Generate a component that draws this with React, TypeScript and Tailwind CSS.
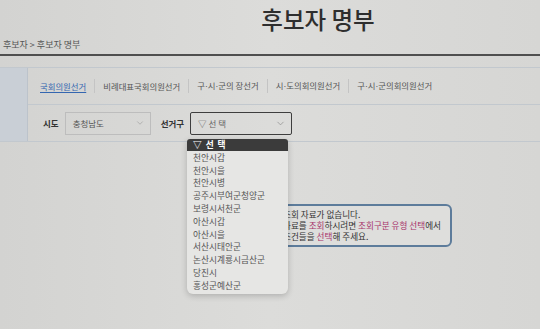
import { ChevronDown } from "lucide-react";

const tabs = [
  "국회의원선거",
  "비례대표국회의원선거",
  "구·시·군의 장선거",
  "시·도의회의원선거",
  "구·시·군의회의원선거",
];

const districts = [
  "천안시갑",
  "천안시을",
  "천안시병",
  "공주시부여군청양군",
  "보령시서천군",
  "아산시갑",
  "아산시을",
  "서산시태안군",
  "논산시계룡시금산군",
  "당진시",
  "홍성군예산군",
];

// narrow latin middot between hangul syllables
const TabLabel = ({ text }: { text: string }) => {
  const parts = text.split("·");
  return (
    <>
      {parts.map((p, i) => (
        <span key={i}>
          {i > 0 && <span style={{ fontFamily: '"Liberation Sans", sans-serif' }}>·</span>}
          {p}
        </span>
      ))}
    </>
  );
};

export default function App() {
  return (
    <div
      className="relative w-[540px] h-[329px] overflow-hidden bg-gradient-to-r from-[#d3d3d1] via-[#dcdcda] to-[#d6d6d4] text-[#333]"
      style={{ fontFamily: '"Noto Sans CJK KR", "Noto Sans", sans-serif' }}
    >
      {/* Header */}
      <div className="h-[56px] border-b-2 border-[#4f4f4f] relative">
        <h1 className="pt-[3px] pl-[96px] text-center text-[23.5px] font-medium leading-[33px] text-[#2e2e2e]">
          후보자 명부
        </h1>
        <div className="pl-[3px] mt-[3px] text-[9px] leading-[12px] text-[#555]">
          후보자 &gt; 후보자 명부
        </div>
      </div>

      {/* Search section */}
      <div className="mt-[11px] flex border-t border-b border-[#c2c8ce]">
        <div className="w-[28px] bg-[#c9cfd6] border-r border-[#bcc3cb]" />
        <div className="flex-1 flex flex-col">
          <div className="h-[37px] flex items-center pl-[12px] border-b border-[#c2c8ce] text-[8.4px] text-[#555]">
            {tabs.map((t, i) => (
              <div key={t} className="flex items-center">
                {i > 0 && <span className="w-px h-[14px] bg-[#c4c4c4]" />}
                <span
                  className={
                    i === 0
                      ? "pr-[8px] text-[#3466b0] underline underline-offset-2"
                      : "px-[8px]"
                  }
                >
                  <TabLabel text={t} />
                </span>
              </div>
            ))}
          </div>
          <div className="h-[36px] flex items-center pl-[15px] text-[8.5px]">
            <span className="font-bold text-[#333]">시도</span>
            <div className="ml-[6px] w-[86px] h-[23px] border border-[#bdbdbd] flex items-center justify-between pl-[7px] pr-[5px] text-[#555]">
              <span>충청남도</span>
              <ChevronDown className="w-[10px] h-[10px] text-[#9a9a9a]" strokeWidth={1.5} />
            </div>
            <span className="ml-[10px] font-bold text-[#333]">선거구</span>
            <div className="ml-[6px] w-[102px] h-[23px] border border-[#3e3e3e] rounded-[2px] flex items-center justify-between pl-[7px] pr-[5px] text-[#666]">
              <span>▽ 선 택</span>
              <ChevronDown className="w-[11px] h-[11px] text-[#8a8a8a]" strokeWidth={1.5} />
            </div>
          </div>
        </div>
      </div>

      {/* Empty result message */}
      <div className="mt-[62px] ml-[240px] w-[212px] h-[43px] border-2 border-[#5d7c9b] rounded-[6px] bg-[#dededc] pl-[41px] pt-[3px] text-[8.6px] leading-[11px] text-[#333] whitespace-nowrap">
        <div>조회 자료가 없습니다.</div>
        <div>
          자료를 <span className="text-[#a8336a]">조회</span>하시려면{" "}
          <span className="text-[#a8336a]">조회구분 유형 선택</span>에서
        </div>
        <div>
          조건들을 <span className="text-[#a8336a]">선택</span>해 주세요.
        </div>
      </div>

      {/* Open district dropdown */}
      <div className="absolute left-[187px] top-[139px] w-[101px] bg-[#e6e6e4] rounded-t-[3px] rounded-b-[6px] shadow-[0_2px_6px_rgba(0,0,0,0.2)] text-[8.7px] pb-[2px]">
        <div className="h-[12px] bg-[#3b3b3b] text-white font-bold pl-[6px] flex items-center rounded-t-[3px] tracking-[1px]">
          ▽ 선 택
        </div>
        {districts.map((d) => (
          <div key={d} className="h-[12.8px] flex items-center pl-[6px] text-[#555]">
            {d}
          </div>
        ))}
      </div>
    </div>
  );
}
